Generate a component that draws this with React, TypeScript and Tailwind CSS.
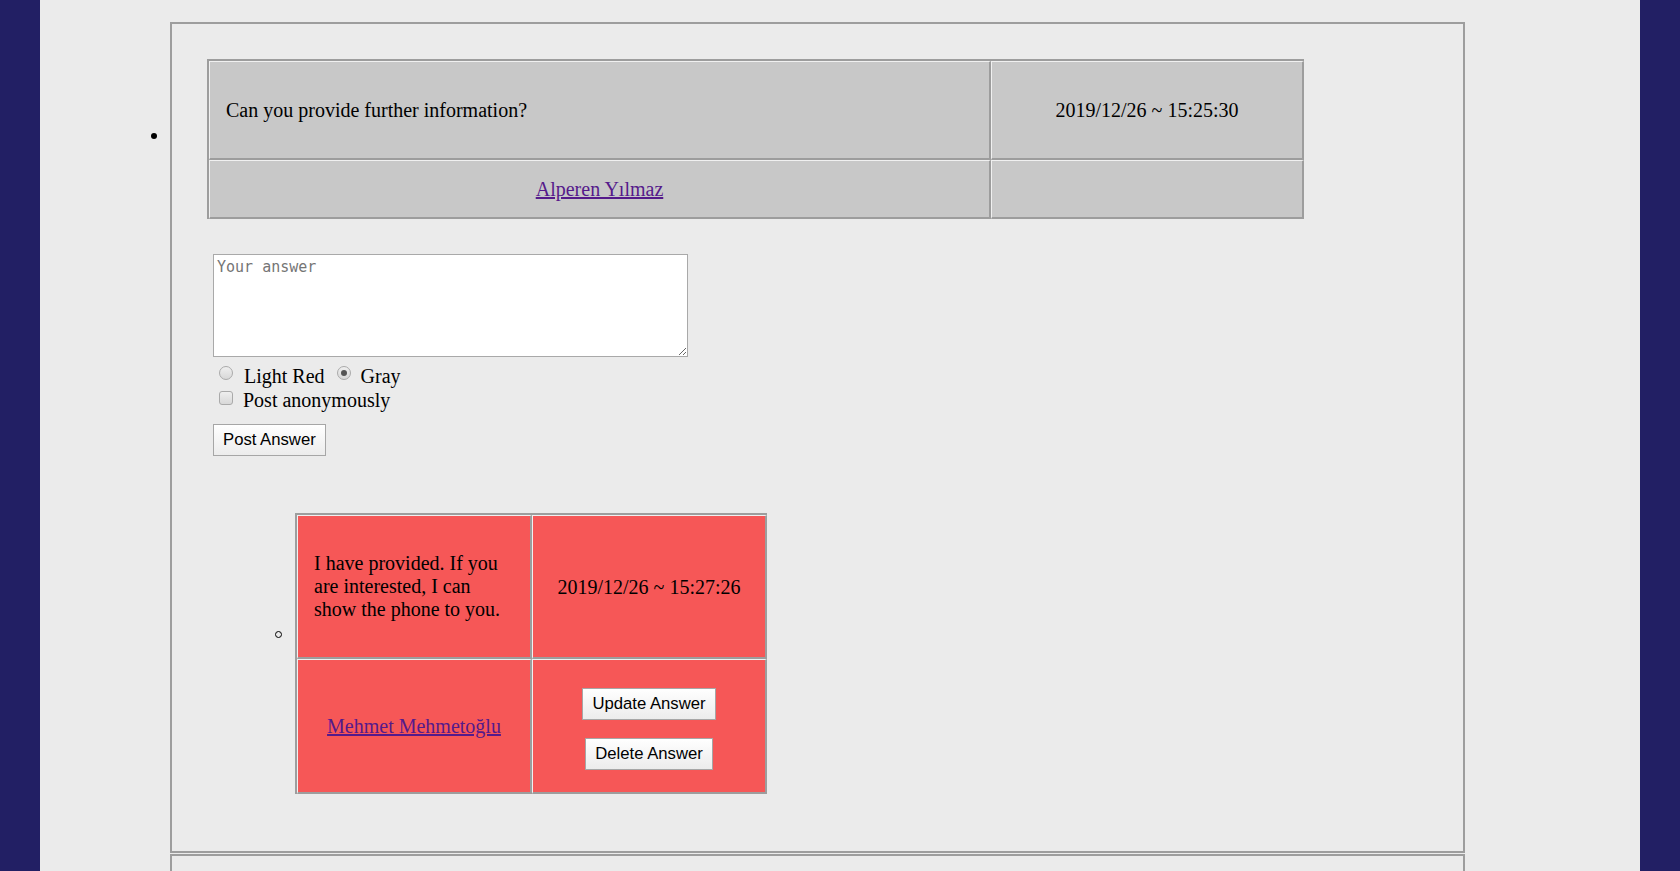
import React from "react";

const G = "border-[#9d9d9d]";

function Cell({
  w,
  bg,
  className,
  children,
}: {
  w: string;
  bg: string;
  className?: string;
  children?: React.ReactNode;
}) {
  return (
    <div
      className={`${w} ${bg} shrink-0 h-full border-t border-l border-t-[#f0f0f0] border-l-[#f0f0f0] border-r-2 border-b-2 border-r-[#9d9d9d] border-b-[#9d9d9d] ${className ?? ""}`}
    >
      {children}
    </div>
  );
}

function Btn({ children }: { children: React.ReactNode }) {
  return (
    <button
      type="button"
      className="h-[32px] px-[9px] border border-[#a6a6a6] bg-linear-to-b from-white to-[#ececec] text-[16.7px] text-black leading-none [font-family:'Liberation_Sans',Arial,sans-serif]"
    >
      {children}
    </button>
  );
}

export default function App() {
  return (
    <div className="h-[871px] overflow-hidden bg-[#221f64] flex justify-center [font-family:'Liberation_Serif','Times_New_Roman',serif] text-[20px] text-black">
      <div className="w-[1600px] h-full bg-[#ebebeb] pt-[22px]">
        {/* first list item */}
        <div className="flex">
          <div className="w-[130px] shrink-0 flex justify-end pr-[13px] pt-[111px]">
            <span className="block w-[6px] h-[6px] rounded-full bg-black" />
          </div>
          <div className={`w-[1295px] h-[831px] border-2 ${G} pl-[35px] pt-[35px]`}>
            {/* question table */}
            <div className={`w-[1097px] border-l-2 border-t-2 ${G}`}>
              <div className="flex h-[99px]">
                <Cell w="w-[782px]" bg="bg-[#c8c8c8]" className="flex items-center pl-[16px]">
                  Can you provide further information?
                </Cell>
                <Cell w="w-[313px]" bg="bg-[#c8c8c8]" className="flex items-center justify-center">
                  2019/12/26 ~ 15:25:30
                </Cell>
              </div>
              <div className="flex h-[59px]">
                <Cell w="w-[782px]" bg="bg-[#c8c8c8]" className="flex items-center justify-center">
                  <a href="#" className="text-[#551a8b] underline">
                    Alperen Yılmaz
                  </a>
                </Cell>
                <Cell w="w-[313px]" bg="bg-[#c8c8c8]" />
              </div>
            </div>

            {/* answer form */}
            <div className="mt-[35px] ml-[6px]">
              <textarea
                placeholder="Your answer"
                className="block w-[475px] h-[103px] bg-white border border-[#a9a9a9] pt-[4px] px-[3px] pb-[3px] text-[15px] leading-[1.17] [font-family:'DejaVu_Sans_Mono',monospace] placeholder:text-[#757575] outline-none"
              />
            </div>
            <div className="mt-[7px] h-[23px] flex items-center pl-[12px]">
              <span className="block w-[14px] h-[14px] rounded-full border border-[#aaaaaa] bg-linear-to-b from-[#efefef] to-[#d8d8d8] -mt-[6px]" />
              <span className="ml-[11px]">Light Red</span>
              <span className="ml-[12px] w-[14px] h-[14px] rounded-full border border-[#aaaaaa] bg-linear-to-b from-[#efefef] to-[#d8d8d8] -mt-[6px] flex items-center justify-center">
                <span className="block w-[6px] h-[6px] rounded-full bg-[#555]" />
              </span>
              <span className="ml-[10px]">Gray</span>
            </div>
            <div className="mt-[1px] h-[23px] flex items-center pl-[12px]">
              <span className="block w-[14px] h-[14px] rounded-[3px] border border-[#aaaaaa] bg-linear-to-b from-[#efefef] to-[#d8d8d8] -mt-[4px]" />
              <span className="ml-[10px]">Post anonymously</span>
            </div>
            <div className="mt-[12px] ml-[6px]">
              <Btn>Post Answer</Btn>
            </div>

            {/* answer list item */}
            <div className="mt-[57px] flex items-start pl-[68px]">
              <span className="block mt-[118px] w-[7px] h-[7px] rounded-full border border-black" />
              <div className={`ml-[13px] w-[472px] border-l-2 border-t-2 ${G}`}>
                <div className="flex h-[144px]">
                  <Cell w="w-[235px]" bg="bg-[#f65757]" className="flex items-center pl-[16px] leading-[23px]">
                    <span>
                      I have provided. If you
                      <br />
                      are interested, I can
                      <br />
                      show the phone to you.
                    </span>
                  </Cell>
                  <Cell w="w-[235px]" bg="bg-[#f65757]" className="flex items-center justify-center">
                    2019/12/26 ~ 15:27:26
                  </Cell>
                </div>
                <div className="flex h-[135px]">
                  <Cell w="w-[235px]" bg="bg-[#f65757]" className="flex items-center justify-center">
                    <a href="#" className="text-[#551a8b] underline">
                      Mehmet Mehmetoğlu
                    </a>
                  </Cell>
                  <Cell w="w-[235px]" bg="bg-[#f65757]" className="flex flex-col items-center justify-center gap-[18px] pt-[6px]">
                    <Btn>Update Answer</Btn>
                    <Btn>Delete Answer</Btn>
                  </Cell>
                </div>
              </div>
            </div>
          </div>
        </div>

        {/* next list item (cut off) */}
        <div className="flex mt-[1px]">
          <div className="w-[130px] shrink-0" />
          <div className={`w-[1295px] h-[300px] border-2 ${G}`} />
        </div>
      </div>
    </div>
  );
}
